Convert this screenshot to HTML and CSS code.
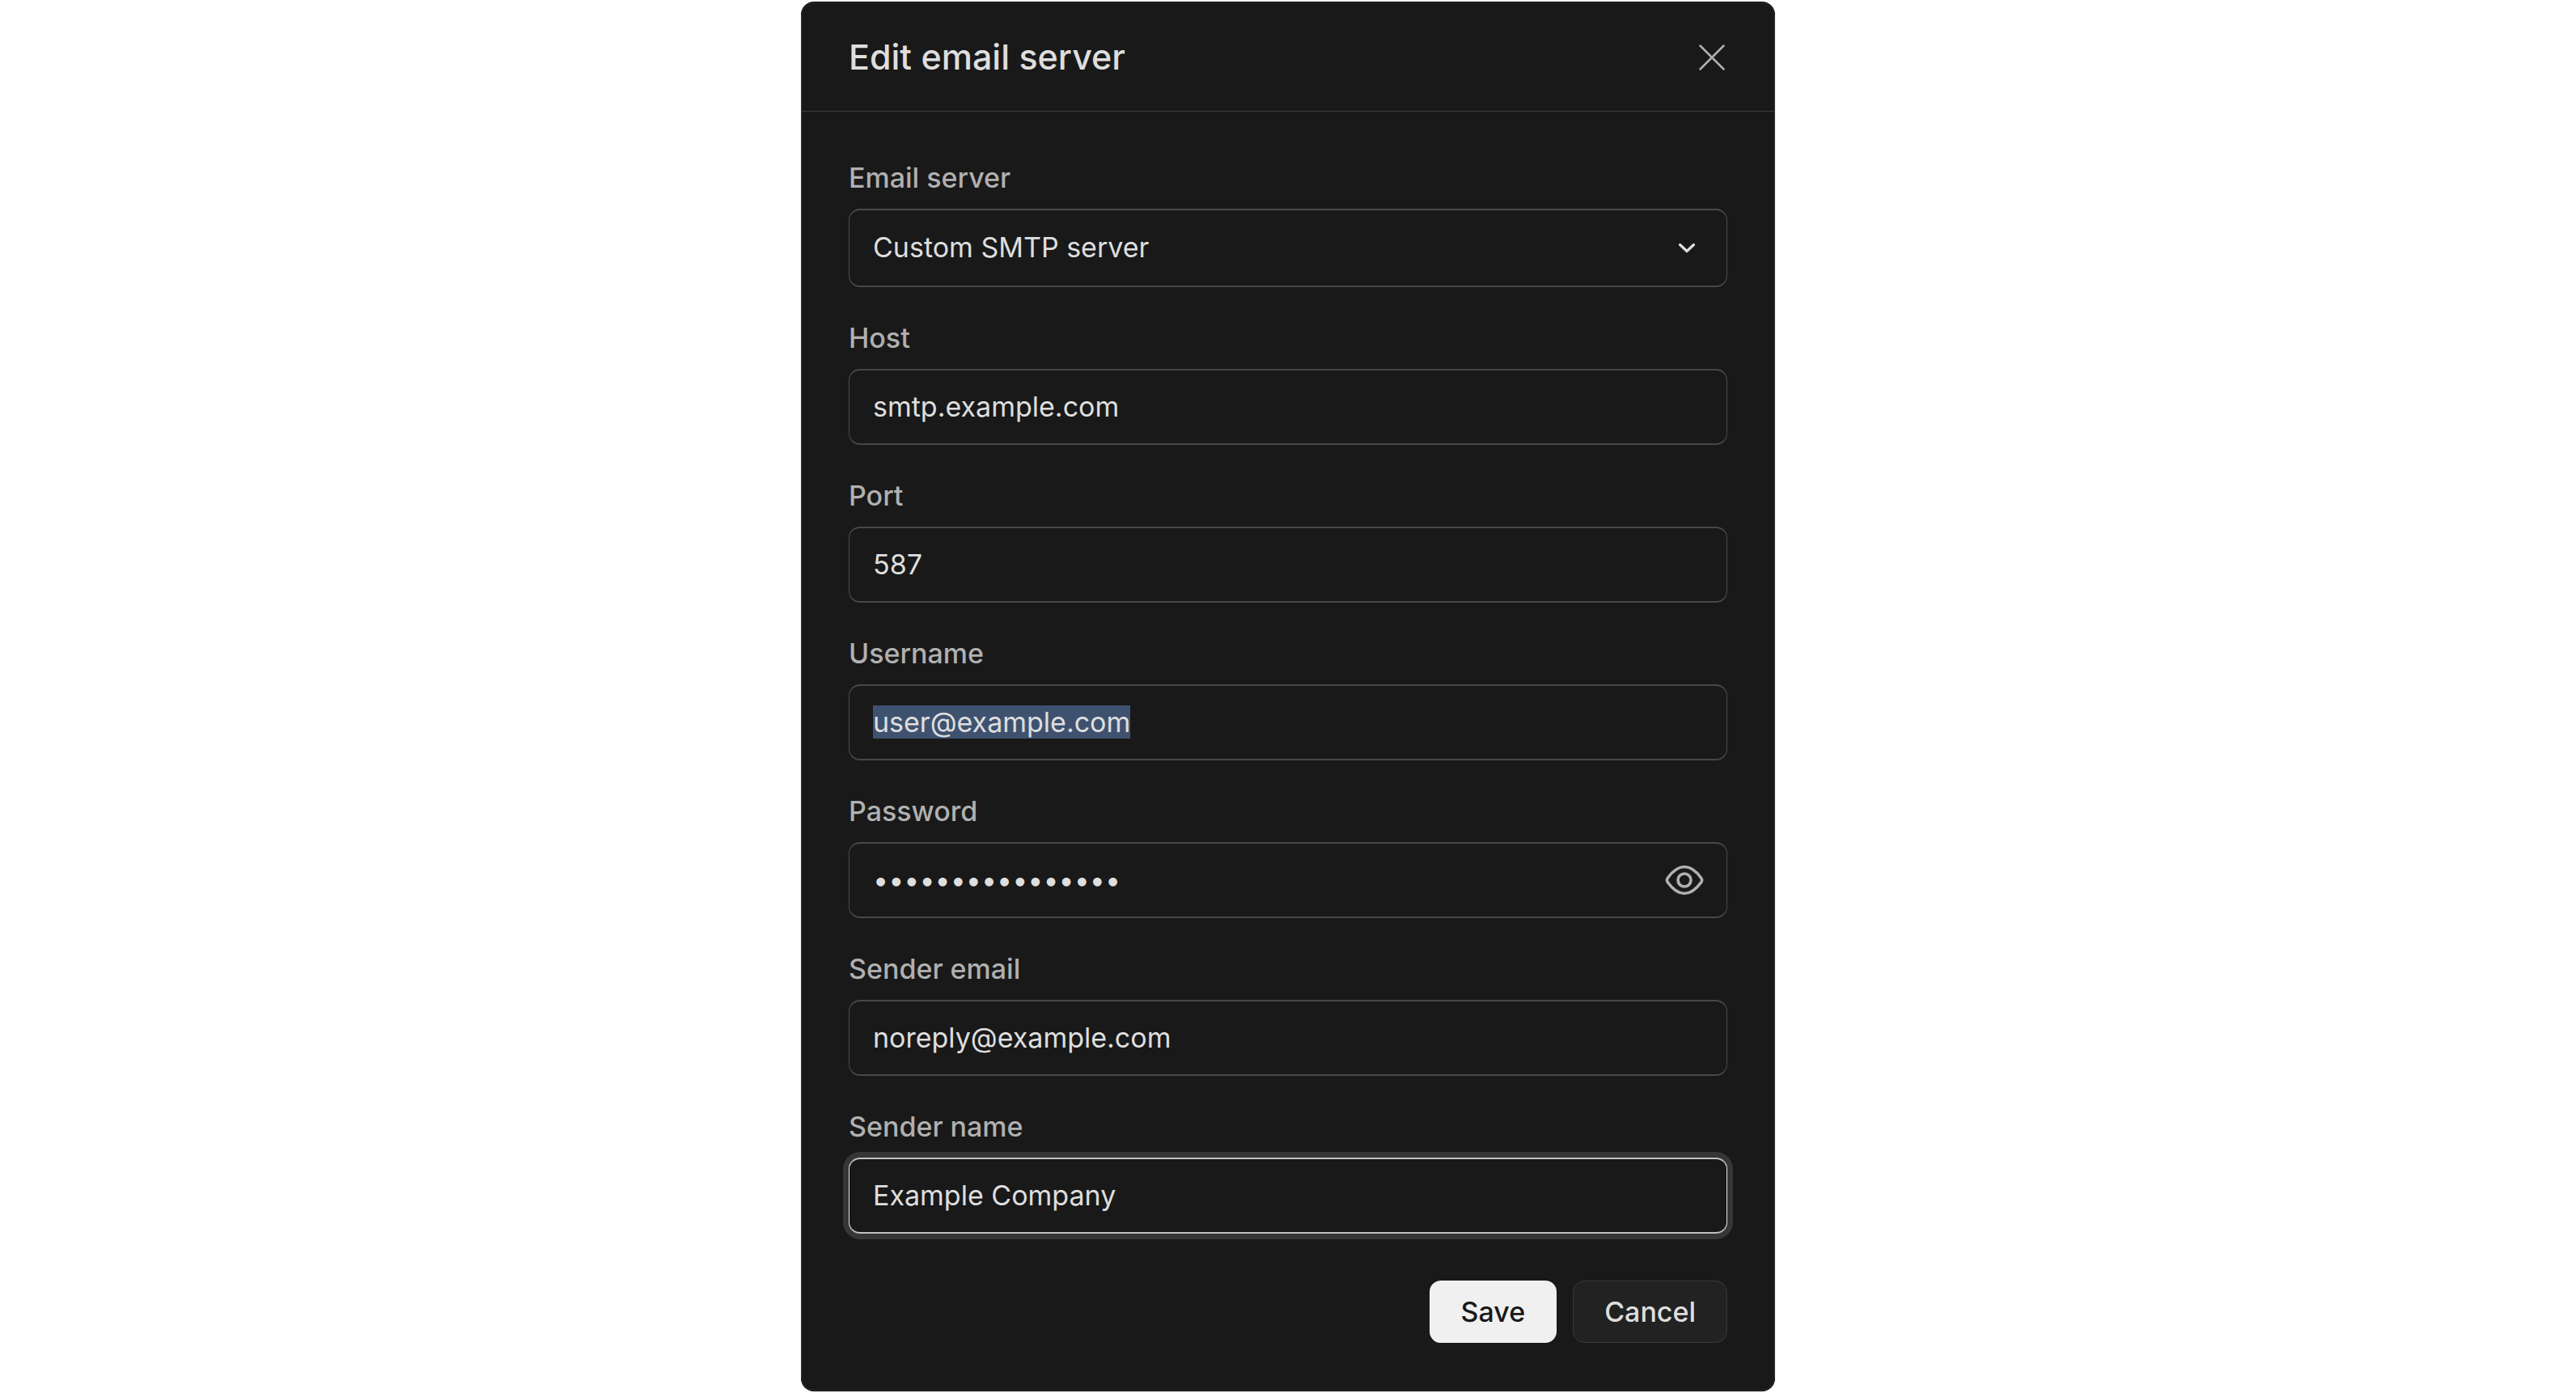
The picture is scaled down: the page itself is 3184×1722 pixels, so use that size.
FILE: index.html
```html
<!DOCTYPE html>
<html lang="en">
<head>
  <meta charset="utf-8">
  <meta name="viewport" content="width=device-width, initial-scale=1">
  <title>Edit email server</title>
  <link rel="stylesheet" href="styles.css">
</head>
<body>
  <main class="page">
    <section class="dialog" role="dialog" aria-labelledby="dialog-title">
      <header class="dialog-header">
        <h1 class="dialog-title" id="dialog-title">Edit email server</h1>
        <button class="icon-button close-button" type="button" aria-label="Close">
          <svg class="close-icon" viewBox="0 0 32 32" aria-hidden="true"><path d="M1.5 1.5 30.5 30.5M30.5 1.5 1.5 30.5"/></svg>
        </button>
      </header>
      <form class="dialog-form">
        <div class="field">
          <label class="label" for="server">Email server</label>
          <div class="control-wrap">
            <select class="control control-select" id="server">
              <option>Custom SMTP server</option>
            </select>
            <svg class="chevron-icon" viewBox="0 0 20 12" aria-hidden="true"><path d="M1.5 1.5 10 9.5 18.5 1.5"/></svg>
          </div>
        </div>
        <div class="field">
          <label class="label" for="host">Host</label>
          <input class="control" id="host" type="text" value="smtp.example.com">
        </div>
        <div class="field">
          <label class="label" for="port">Port</label>
          <input class="control" id="port" type="text" inputmode="numeric" value="587">
        </div>
        <div class="field">
          <label class="label" for="username">Username</label>
          <input class="control" id="username" type="text" value="user@example.com" spellcheck="false">
        </div>
        <div class="field">
          <label class="label" for="password">Password</label>
          <div class="control-wrap">
            <input class="control control-password" id="password" type="password" value="examplepassword1">
            <button class="icon-button reveal-button" type="button" aria-label="Show password">
              <svg class="eye-icon" viewBox="0 0 48 38" aria-hidden="true"><path d="M3.4 16.2C8 9.800 14.500 2.500 24 2.500S40 9.800 44.600 16.200Q46.600 19 44.600 21.800C40 28.200 33.500 35.500 24 35.500S8 28.200 3.400 21.800Q1.400 19 3.400 16.200Z"/><circle cx="24" cy="19" r="8"/></svg>
            </button>
          </div>
        </div>
        <div class="field">
          <label class="label" for="sender-email">Sender email</label>
          <input class="control" id="sender-email" type="text" value="noreply@example.com" spellcheck="false">
        </div>
        <div class="field">
          <label class="label" for="sender-name">Sender name</label>
          <input class="control control-active" id="sender-name" type="text" value="Example Company">
        </div>
        <div class="actions">
          <button class="button button-primary" type="button">Save</button>
          <button class="button button-secondary" type="button">Cancel</button>
        </div>
      </form>
    </section>
  </main>
  <script src="script.js"></script>
</body>
</html>
```
FILE: styles.css
```css
* {
  box-sizing: border-box;
}

body {
  margin: 0;
  background: #ffffff;
  color: #dedede;
  font-family: Inter, "Liberation Sans", sans-serif;
  font-size: 34px;
}

.page {
  display: flex;
  justify-content: center;
  padding: 3px 0;
}

.dialog {
  width: 100%;
  max-width: 1204px;
  border: 1px solid #333333;
  border-radius: 16px;
  background: #191919;
  box-shadow: 0 -1px 0 #000000, 0 1px 0 #000000;
}

.dialog-header {
  display: flex;
  align-items: center;
  justify-content: space-between;
  padding: 40px 58px;
  border-bottom: 1px solid #3c3c3c;
}

.dialog-title {
  margin: 0;
  font-size: 43px;
  font-weight: 500;
  line-height: 53px;
}

.dialog-form {
  display: flex;
  flex-direction: column;
  gap: 41px;
  padding: 60px 58px 58px;
}

.field {
  display: flex;
  flex-direction: column;
  gap: 16px;
}

.label {
  color: #b0b0b0;
  font-weight: 500;
  line-height: 44px;
}

.control-wrap {
  display: grid;
  align-items: center;
}

.control-wrap > * {
  grid-area: 1 / 1;
}

.control {
  width: 100%;
  height: 94px;
  padding: 0 29px 2px;
  border: solid #484848;
  border-width: 2px 1px;
  border-radius: 14px;
  outline: none;
  background: #191919;
  color: #dedede;
  font: inherit;
  appearance: none;
}

.control-select {
  height: 97px;
}

.control-password {
  padding-right: 100px;
}

.control-active {
  border-color: #c0c0c0 #e0e0e0;
  box-shadow: 0 0 0 7px #363636;
}

.control::selection {
  background: rgba(62, 82, 112, 0.996);
  color: #dedede;
}

.icon-button {
  display: flex;
  padding: 0;
  border: 0;
  background: none;
  color: #b0b0b0;
}

.close-button {
  margin-right: 3px;
}

.reveal-button {
  justify-self: end;
  margin-right: 29px;
}

svg {
  fill: none;
  stroke: currentColor;
  stroke-linecap: round;
  stroke-linejoin: round;
}

.close-icon {
  width: 32px;
  height: 32px;
  stroke-width: 2.5;
}

.chevron-icon {
  justify-self: end;
  width: 20px;
  height: 12px;
  margin-right: 40px;
  stroke-width: 3.2;
  pointer-events: none;
}

.eye-icon {
  width: 48px;
  height: 38px;
  stroke-width: 3.6;
}

.actions {
  display: flex;
  justify-content: flex-end;
  gap: 20px;
  padding-top: 17px;
}

.button {
  height: 77px;
  padding: 0 38px;
  border: 1px solid transparent;
  border-radius: 14px;
  font: inherit;
  font-weight: 500;
}

.button-primary {
  background: #f0f0f0;
  color: #191919;
}

.button-secondary {
  border-color: #383838;
  background: #222222;
  color: #dedede;
}
```
FILE: script.js
```js
const username = document.getElementById("username");
username.focus();
username.select();
```
